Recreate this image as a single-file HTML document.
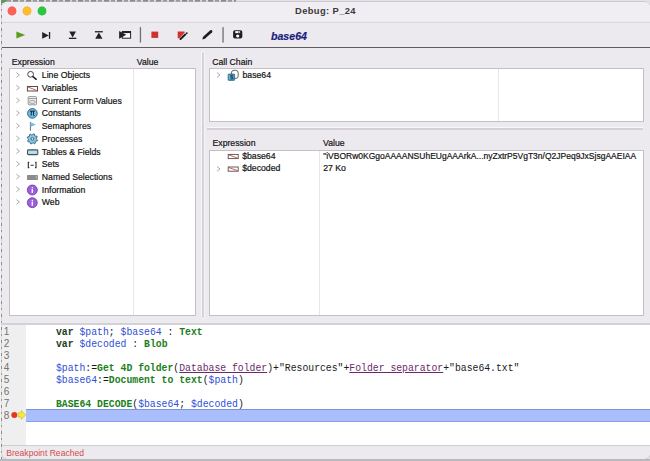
<!DOCTYPE html>
<html><head><meta charset="utf-8">
<style>
*{margin:0;padding:0;box-sizing:border-box}
html,body{width:650px;height:461px;overflow:hidden;background:#e2e1e4;font-family:"Liberation Sans",sans-serif;position:relative}
.a{position:absolute}
#win{position:absolute;left:1.5px;top:1.7px;width:648px;height:457.3px;border-radius:5px;background:#EDEAEF;overflow:hidden;box-shadow:0 0 0 0.4px #b5b3b7}
.t{position:absolute;white-space:pre;font-size:8.7px;color:#141414;line-height:10px;-webkit-text-stroke:0.2px currentColor}
.box{position:absolute;background:#fff;border:1px solid #c3c1c5}
.chev{position:absolute;width:3.6px;height:3.6px;border-right:1px solid #9a9a9a;border-top:1px solid #9a9a9a;transform:rotate(45deg)}
.code{position:absolute;white-space:pre;font-family:"Liberation Mono",monospace;font-size:10.4px;line-height:12px;color:#1a1a1a;transform:scaleX(0.9407);transform-origin:0 0}
.k{color:#1d3d1d;font-weight:bold}
.v{color:#2f4fd6}
.c{color:#1b801b;font-weight:bold}
.p{color:#6a2a6a;text-decoration:underline}
.ln{position:absolute;font-family:"Liberation Sans",sans-serif;font-size:10px;color:#727272;line-height:12px}
svg{position:absolute;left:0;top:0}
</style></head><body>
<div class="a" style="left:0;top:0;width:236px;height:1.5px;background:repeating-linear-gradient(90deg,#8a8a8a 0 5px,#d6d6d6 5px 7px,#9a9a9a 7px 11px,#e0e0e0 11px 13px)"></div>
<div class="a" style="left:0;top:0;width:7px;height:2.5px;background:#5d9a5d;border-radius:0 0 3px 0"></div>
<div id="win"></div>
<div class="a" style="left:0;top:0;width:1px;height:461px;background:#f2f2f2"></div>
<div class="a" style="left:0.9px;top:2px;width:0.8px;height:457px;background:repeating-linear-gradient(180deg,#8c8c8c 0 3px,#d4d4d4 3px 7px,#9a9a9a 7px 9px,#dcdcdc 9px 13px)"></div>
<div class="a" style="left:0;top:459.2px;width:650px;height:1.8px;background:#b9b8bb"></div>
<!-- title bar -->
<div class="a" style="left:1.5px;top:1.7px;width:648px;height:19.8px;background:#F1EEF3;border-radius:5px 5px 0 0"></div>
<div class="a" style="left:1.5px;top:21.5px;width:648px;height:1px;background:#dcd8de"></div>
<div class="a" style="left:7.85px;top:6.8px;width:8.6px;height:8.6px;border-radius:50%;background:#fe5f57;box-shadow:0 0 0 0.4px #e2463f"></div>
<div class="a" style="left:22.80px;top:6.8px;width:8.6px;height:8.6px;border-radius:50%;background:#febc2e;box-shadow:0 0 0 0.4px #e1a116"></div>
<div class="a" style="left:37.90px;top:6.8px;width:8.6px;height:8.6px;border-radius:50%;background:#28c840;box-shadow:0 0 0 0.4px #1aab29"></div>
<div class="t" style="left:295px;top:5.3px;font-size:9.4px;letter-spacing:0.38px;font-weight:bold;color:#3a3a3a;line-height:12px;-webkit-text-stroke:0">Debug: P_24</div>
<!-- toolbar line -->
<div class="a" style="left:1.5px;top:47px;width:648px;height:1.4px;background:#5e5e60"></div>

<!-- toolbar icons -->
<svg width="650" height="60" viewBox="0 0 650 60">
  <polygon points="16.4,31.4 25.2,35 16.4,38.6" fill="#5b9c1e"/>
  <polygon points="42.2,32 48.8,35.4 42.2,38.8" fill="#222"/>
  <rect x="48.9" y="32" width="1.3" height="6.8" fill="#222"/>
  <polygon points="69.2,31.6 76,31.6 72.6,37.6" fill="#222"/>
  <rect x="68.9" y="37.7" width="7.4" height="1.3" fill="#222"/>
  <rect x="94.9" y="31.1" width="7.9" height="1.3" fill="#222"/>
  <polygon points="95.2,38.8 102.5,38.8 98.85,32.6" fill="#222"/>
  <rect x="122.3" y="31.6" width="8.3" height="6.6" fill="#fff" stroke="#222" stroke-width="1"/>
  <rect x="122" y="31.1" width="9" height="2" fill="#222"/>
  <polygon points="119.1,30.9 126.3,34.8 119.1,38.7" fill="#222"/>
  <rect x="139.8" y="27.1" width="1.3" height="15.5" fill="#707070"/>
  <rect x="151.4" y="31.6" width="6.8" height="6.3" fill="#d22f2f"/>
  <polygon points="177.7,31.5 184.6,31.5 184.6,32.4 179.3,38.2 177.7,38.2" fill="#d22f2f"/>
  <line x1="180.5" y1="39" x2="185.2" y2="34.6" stroke="#1e1e1e" stroke-width="2" stroke-linecap="round"/>
  <circle cx="186.7" cy="33.2" r="0.95" fill="#1e1e1e"/>
  <path d="M202.3,39.4 L203.1,36.8 L210.2,30.3 Q211.3,29.6 212.1,30.5 Q212.8,31.3 212.1,32.2 L204.9,38.7 Z" fill="#1e1e1e"/>
  <rect x="222.4" y="27.1" width="1.3" height="15.5" fill="#707070"/>
  <rect x="233.1" y="30.2" width="9.2" height="8.4" rx="1.8" fill="#1e1e1e"/>
  <rect x="235.3" y="31.1" width="4.8" height="2" fill="#fff"/>
  <rect x="238.4" y="31.3" width="0.9" height="1.6" fill="#1e1e1e"/>
  <circle cx="237.7" cy="36" r="1.6" fill="#fff"/>
</svg>
<div class="t" style="left:271px;top:29.5px;font-size:10.6px;font-weight:bold;font-style:italic;color:#1c1c7e;line-height:12px">base64</div>

<!-- left panel -->
<div class="t" style="left:11.8px;top:57px">Expression</div>
<div class="t" style="left:136.8px;top:57px">Value</div>
<div class="box" style="left:8.5px;top:68px;width:187.5px;height:247.5px"></div>
<div class="a" style="left:133.3px;top:69px;width:1px;height:245.5px;background:#e6e6e6"></div>

<!-- splitter -->
<div class="a" style="left:200.9px;top:51.1px;width:4.3px;height:267.6px;background:#f6f5f8;border-radius:2px"></div><div class="a" style="left:202.1px;top:51.8px;width:1.9px;height:266.4px;background:#d5d2d8;border-radius:1px"></div>

<!-- right top panel -->
<div class="t" style="left:212.2px;top:57px">Call Chain</div>
<div class="box" style="left:209px;top:68px;width:434.5px;height:53.5px"></div>
<div class="a" style="left:498px;top:69px;width:1px;height:51.5px;background:#e6e6e6"></div>
<div class="a" style="left:207px;top:127.3px;width:436px;height:1px;background:#f8f7f9"></div><div class="a" style="left:207px;top:128.3px;width:436px;height:1.3px;background:#d3d0d6"></div>

<!-- right bottom panel -->
<div class="t" style="left:212.5px;top:138px">Expression</div>
<div class="t" style="left:323px;top:138px">Value</div>
<div class="box" style="left:209px;top:149.5px;width:434.5px;height:166px"></div>
<div class="a" style="left:319px;top:150.5px;width:1px;height:164px;background:#e6e6e6"></div>

<!-- horizontal main splitter -->
<div class="a" style="left:1.5px;top:323px;width:648px;height:1.6px;background:#d3d1d6"></div>

<!-- code area -->
<div class="a" style="left:1.5px;top:324.6px;width:648px;height:120.6px;background:#fff"></div>
<div class="a" style="left:1.5px;top:324.6px;width:24.5px;height:120.6px;background:#efefef"></div>
<div class="a" style="left:26.3px;top:409px;width:623.7px;height:12.5px;background:#a9befa;border-top:1px solid #7b93dc;border-bottom:1px solid #86a0ef"></div>


<!-- content -->
<div class="t" style="left:41.8px;top:70.3px">Line Objects</div>
<div class="t" style="left:41.8px;top:83.0px">Variables</div>
<div class="t" style="left:41.8px;top:95.7px">Current Form Values</div>
<div class="t" style="left:41.8px;top:108.4px">Constants</div>
<div class="t" style="left:41.8px;top:121.1px">Semaphores</div>
<div class="t" style="left:41.8px;top:133.8px">Processes</div>
<div class="t" style="left:41.8px;top:146.5px">Tables &amp; Fields</div>
<div class="t" style="left:41.8px;top:159.2px">Sets</div>
<div class="t" style="left:41.8px;top:171.9px">Named Selections</div>
<div class="t" style="left:41.8px;top:184.6px">Information</div>
<div class="t" style="left:41.8px;top:197.3px">Web</div>
<div class="t" style="left:242.5px;top:69.8px">base64</div>
<div class="t" style="left:242.2px;top:150.8px">$base64</div>
<div class="t" style="left:242.2px;top:163.4px">$decoded</div>
<div class="t" style="left:323.2px;top:150.8px;font-size:8.5px">"iVBORw0KGgoAAAANSUhEUgAAArkA...nyZxtrP5VgT3n/Q2JPeq9JxSjsgAAEIAA</div>
<div class="t" style="left:323.2px;top:163.4px">27 Ko</div>
<svg width="650" height="461" viewBox="0 0 650 461">
<polyline points="16.4,72.6 19.4,75.0 16.4,77.4" fill="none" stroke="#a0a0a0" stroke-width="0.9"/>
<polyline points="16.4,85.3 19.4,87.7 16.4,90.1" fill="none" stroke="#a0a0a0" stroke-width="0.9"/>
<polyline points="16.4,98.0 19.4,100.4 16.4,102.8" fill="none" stroke="#a0a0a0" stroke-width="0.9"/>
<polyline points="16.4,110.7 19.4,113.1 16.4,115.5" fill="none" stroke="#a0a0a0" stroke-width="0.9"/>
<polyline points="16.4,123.4 19.4,125.8 16.4,128.2" fill="none" stroke="#a0a0a0" stroke-width="0.9"/>
<polyline points="16.4,136.1 19.4,138.5 16.4,140.9" fill="none" stroke="#a0a0a0" stroke-width="0.9"/>
<polyline points="16.4,148.8 19.4,151.2 16.4,153.6" fill="none" stroke="#a0a0a0" stroke-width="0.9"/>
<polyline points="16.4,161.5 19.4,163.9 16.4,166.3" fill="none" stroke="#a0a0a0" stroke-width="0.9"/>
<polyline points="16.4,174.2 19.4,176.6 16.4,179.0" fill="none" stroke="#a0a0a0" stroke-width="0.9"/>
<polyline points="16.4,186.9 19.4,189.3 16.4,191.7" fill="none" stroke="#a0a0a0" stroke-width="0.9"/>
<polyline points="16.4,199.6 19.4,202.0 16.4,204.4" fill="none" stroke="#a0a0a0" stroke-width="0.9"/>

<circle cx="30.6" cy="74.3" r="2.9" fill="none" stroke="#333" stroke-width="0.9"/>
<line x1="32.9" y1="76.6" x2="36.2" y2="79.3" stroke="#222" stroke-width="1.5" stroke-linecap="round"/>
<rect x="27.4" y="86.5" width="10.1" height="4.5" fill="#fff" stroke="#4e4444" stroke-width="0.95"/>
<line x1="28" y1="87" x2="36.9" y2="90.5" stroke="#d04848" stroke-width="0.9"/>
<rect x="28.2" y="96.6" width="8.3" height="8.2" rx="0.8" fill="#f2f2f2" stroke="#8c8c8c" stroke-width="0.9"/>
<line x1="28.3" y1="98.6" x2="36.4" y2="98.6" stroke="#8c8c8c" stroke-width="0.9"/>
<rect x="29.7" y="100.8" width="5.3" height="2.4" rx="0.6" fill="#fff" stroke="#8c8c8c" stroke-width="0.9"/>
<circle cx="32.4" cy="113.4" r="4.8" fill="#6bbde8" stroke="#36607c" stroke-width="1"/>
<path d="M29.9,111.2 L34.9,111.2 M31.4,111.2 L31.1,115.7 M33.4,111.2 L33.5,115.1 Q33.6,115.8 34.5,115.6" fill="none" stroke="#13202c" stroke-width="0.95"/>
<line x1="30.4" y1="122" x2="30.4" y2="130.8" stroke="#5e5e5e" stroke-width="0.9"/>
<polygon points="30.5,122.3 35.9,124.6 30.5,127" fill="#6cc0ef"/>

<polygon points="37.50,139.93 37.20,140.91 35.72,141.13 35.22,141.74 35.27,143.23 34.37,143.71 33.17,142.83 32.39,142.90 31.37,144.00 30.39,143.70 30.17,142.22 29.56,141.72 28.07,141.77 27.59,140.87 28.47,139.67 28.40,138.89 27.30,137.87 27.60,136.89 29.08,136.67 29.58,136.06 29.53,134.57 30.43,134.09 31.63,134.97 32.41,134.90 33.43,133.80 34.41,134.10 34.63,135.58 35.24,136.08 36.73,136.03 37.21,136.93 36.33,138.13 36.40,138.91" fill="#84caec" stroke="#34546c" stroke-width="0.9"/>
<circle cx="32.4" cy="138.9" r="1.4" fill="#cfe9f7" stroke="#34546c" stroke-width="0.9"/>

<rect x="27.5" y="149.9" width="10.3" height="4.7" rx="0.9" fill="#a9dcf4" stroke="#505050" stroke-width="1.1"/><line x1="29" y1="152.2" x2="36.3" y2="152.2" stroke="#c9ecfb" stroke-width="0.6"/>
<path d="M29.3,162.2 L28.3,162.2 L28.3,167.6 L29.3,167.6 M35.0,162.2 L36,162.2 L36,167.6 L35.0,167.6 M30.6,165.2 L33.7,165.2" fill="none" stroke="#2e2e2e" stroke-width="1.1"/>
<rect x="27" y="174.9" width="11" height="5.2" rx="0.5" fill="#8c8c8c"/><path d="M37.6,175.6 L35.8,177.3 L37.6,179" fill="none" stroke="#d8d8d8" stroke-width="0.7"/>
<circle cx="32.3" cy="190" r="5" fill="#9d5ddc" stroke="#6a38a8" stroke-width="0.8"/>
<circle cx="32.3" cy="187.7" r="0.75" fill="#fff"/><rect x="31.6" y="189.0" width="1.4" height="4" fill="#fff"/>
<circle cx="32.3" cy="202.7" r="5" fill="#9d5ddc" stroke="#6a38a8" stroke-width="0.8"/>
<circle cx="32.3" cy="200.4" r="0.75" fill="#fff"/><rect x="31.6" y="201.7" width="1.4" height="4" fill="#fff"/>

<polyline points="217,72.6 220,75 217,77.4" fill="none" stroke="#a0a0a0" stroke-width="0.9"/>

<rect x="231.4" y="70.3" width="6.8" height="8.2" rx="2.6" fill="#fff" stroke="#555" stroke-width="0.9"/>
<rect x="228.1" y="74" width="6.6" height="6.4" rx="0.9" fill="#4a93b9" stroke="#2e5d78" stroke-width="0.7"/>
<path d="M229.2,75.2 L230,79.4" stroke="#8cc6e2" stroke-width="0.8"/>
<path d="M232.9,75.6 L230.8,75.6 L230.8,77.2 L232.6,77.2 L232.6,79 L230.6,79" fill="none" stroke="#1d4660" stroke-width="0.9"/>

<rect x="228.2" y="154.4" width="10" height="4.2" fill="#fff" stroke="#5a4a4a" stroke-width="0.9"/>
<line x1="228.8" y1="154.9" x2="237.6" y2="158.1" stroke="#d04848" stroke-width="0.9"/>
<polyline points="217,166.5 220,168.9 217,171.3" fill="none" stroke="#a0a0a0" stroke-width="0.9"/>
<rect x="228.2" y="167.0" width="10" height="4.2" fill="#fff" stroke="#5a4a4a" stroke-width="0.9"/>
<line x1="228.8" y1="167.5" x2="237.6" y2="170.7" stroke="#d04848" stroke-width="0.9"/>
</svg>
<!-- /content -->

<!-- code -->
<div class="ln" style="left:3.7px;top:326.1px">1</div>
<div class="code" style="left:56.2px;top:326.1px"><span class="k">var</span> <span class="v">$path</span>; <span class="v">$base64</span> : <span class="c">Text</span></div>
<div class="ln" style="left:3.7px;top:338.1px">2</div>
<div class="code" style="left:56.2px;top:338.1px"><span class="k">var</span> <span class="v">$decoded</span> : <span class="c">Blob</span></div>
<div class="ln" style="left:3.7px;top:350.1px">3</div>
<div class="ln" style="left:3.7px;top:362.1px">4</div>
<div class="code" style="left:56.2px;top:362.1px"><span class="v">$path</span>:=<span class="c">Get 4D folder</span>(<span class="p">Database folder</span>)+"Resources"+<span class="p">Folder separator</span>+"base64.txt"</div>
<div class="ln" style="left:3.7px;top:374.1px">5</div>
<div class="code" style="left:56.2px;top:374.1px"><span class="v">$base64</span>:=<span class="c">Document to text</span>(<span class="v">$path</span>)</div>
<div class="ln" style="left:3.7px;top:386.1px">6</div>
<div class="ln" style="left:3.7px;top:398.1px">7</div>
<div class="code" style="left:56.2px;top:398.1px"><span class="c">BASE64 DECODE</span>(<span class="v">$base64</span>; <span class="v">$decoded</span>)</div>
<div class="ln" style="left:3.7px;top:410.1px">8</div>
<svg width="650" height="461" viewBox="0 0 650 461">
<circle cx="14.3" cy="414.9" r="3" fill="#e8361e"/>
<polygon points="18,412.8 21.2,412.8 21.2,410.4 25.9,414.9 21.2,419.4 21.2,417 18,417" fill="#f6ea3a" stroke="#c9b52a" stroke-width="0.6"/>
</svg>
<!-- status bar -->
<div class="a" style="left:1.5px;top:445.2px;width:648px;height:1px;background:#d0cdd2"></div>
<div class="t" style="left:6.2px;top:447.9px;font-size:8.6px;color:#d24a4a;-webkit-text-stroke:0">Breakpoint Reached</div>
</body></html>
